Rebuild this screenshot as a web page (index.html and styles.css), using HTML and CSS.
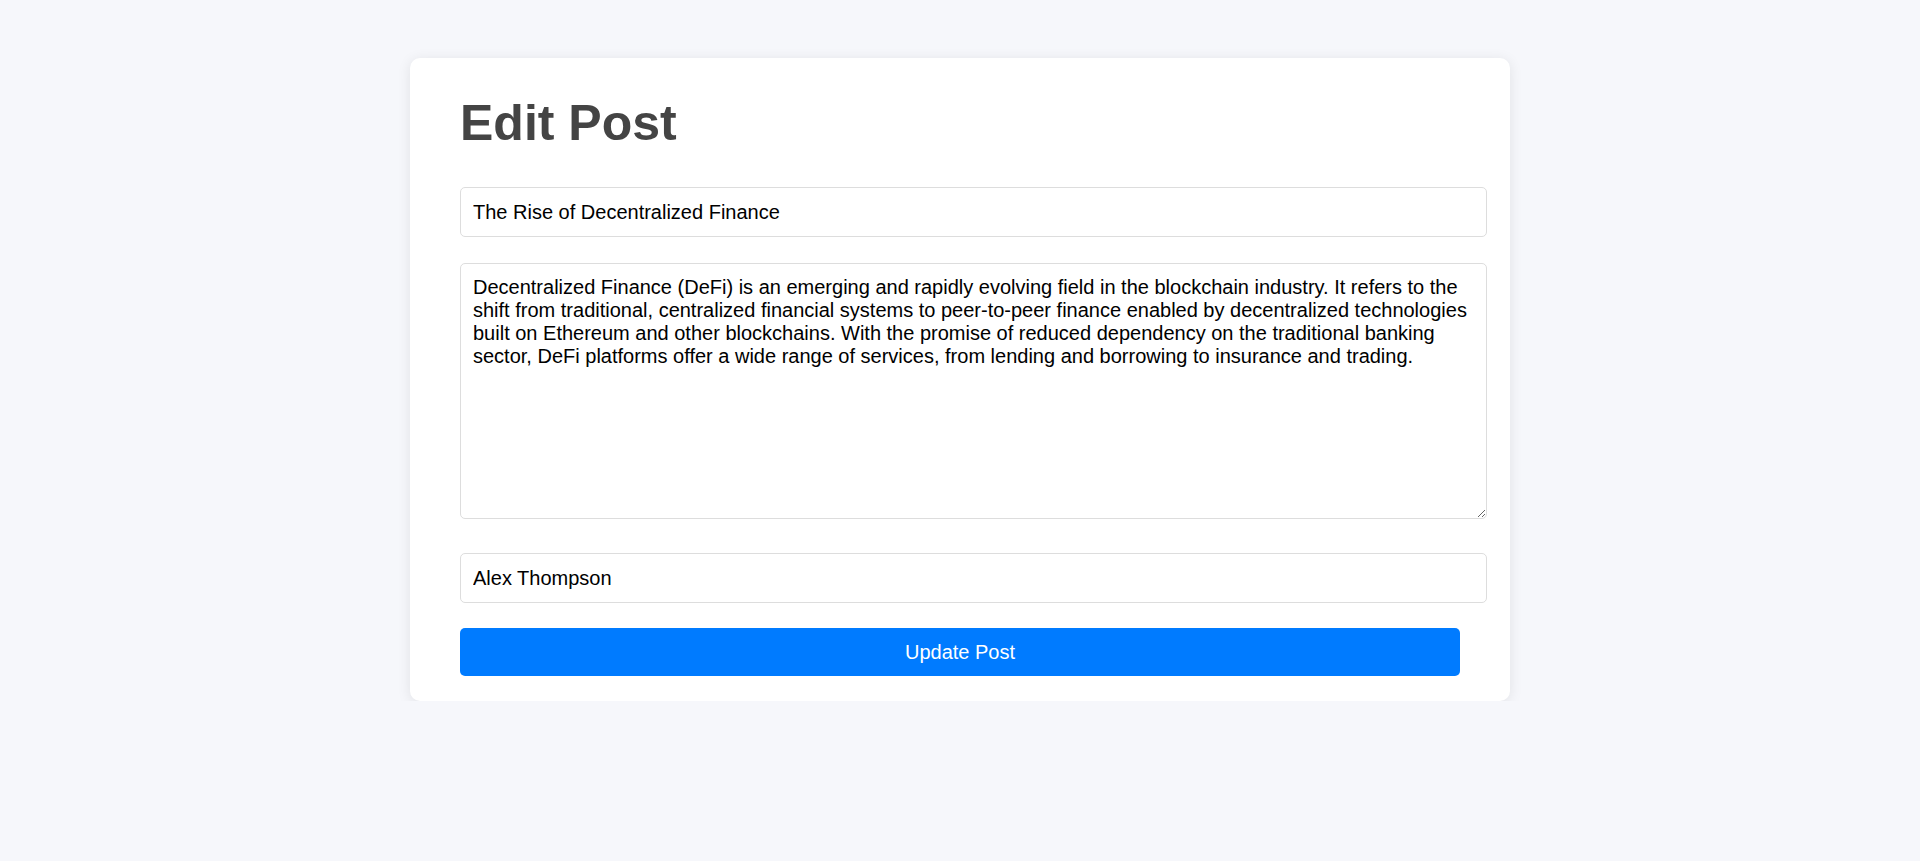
FILE: index.html
```html
<!DOCTYPE html>
<html lang="en">
<head>
<meta charset="UTF-8">
<title>Edit Post</title>
<link rel="stylesheet" href="styles.css">
</head>
<body>
<div class="card">
  <h1 class="title">Edit Post</h1>
  <form class="form">
    <input class="field field-title" type="text" value="The Rise of Decentralized Finance">
    <textarea class="field field-content">Decentralized Finance (DeFi) is an emerging and rapidly evolving field in the blockchain industry. It refers to the shift from traditional, centralized financial systems to peer-to-peer finance enabled by decentralized technologies built on Ethereum and other blockchains. With the promise of reduced dependency on the traditional banking sector, DeFi platforms offer a wide range of services, from lending and borrowing to insurance and trading.</textarea>
    <input class="field field-author" type="text" value="Alex Thompson">
    <button class="submit" type="button">Update Post</button>
  </form>
</div>
</body>
</html>
```
FILE: styles.css
```css
html, body {
  margin: 0;
  padding: 0;
}
body {
  background: #f6f7fb;
  font-family: "Liberation Sans", Arial, sans-serif;
}
.card {
  width: 1000px;
  margin: 58px auto 0;
  padding: 36px 50px 25px;
  background: #ffffff;
  border-radius: 10px;
  box-shadow: 0 2px 14px rgba(0, 0, 0, 0.09);
}
.title {
  margin: 0 0 35px;
  font-size: 50px;
  font-weight: bold;
  line-height: normal;
  color: #444444;
}
.form {
  display: flex;
  flex-direction: column;
  align-items: flex-start;
}
.field {
  display: block;
  box-sizing: border-box;
  width: 1027px;
  padding: 12px;
  border: 1px solid #dddddd;
  border-radius: 5px;
  font-family: "Liberation Sans", Arial, sans-serif;
  font-size: 20px;
  line-height: 24px;
  color: #000000;
  background: #ffffff;
  outline: none;
}
.field-title {
  height: 50px;
  margin: 0 0 26px;
}
.field-content {
  height: 256px;
  line-height: 23px;
  margin: 0 0 34px;
  resize: vertical;
}
.field-author {
  height: 50px;
  margin: 0 0 25px;
}
.submit {
  width: 1000px;
  height: 48px;
  padding: 0;
  border: none;
  border-radius: 5px;
  background: #007bff;
  color: #ffffff;
  font-family: "Liberation Sans", Arial, sans-serif;
  font-size: 20px;
  cursor: pointer;
}
```
